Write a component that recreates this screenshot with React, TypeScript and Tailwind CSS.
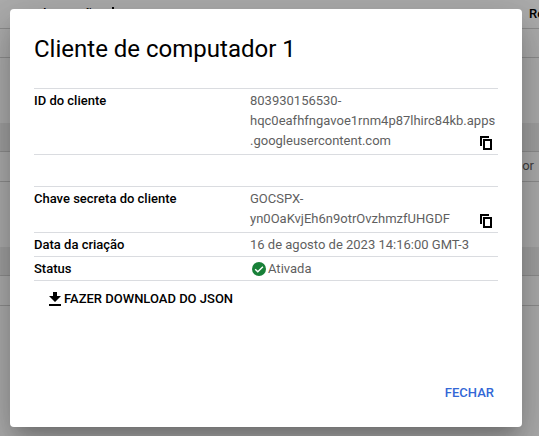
import type { ReactNode } from "react";

function CopyIcon() {
  return (
    <svg viewBox="0 0 12 14" className="block h-[14px] w-[12px]" fill="none" stroke="#000" strokeWidth="2">
      <path d="M1 10V1H9" />
      <path d="M4 4H11V13H4Z" />
    </svg>
  );
}

function DownloadIcon() {
  return (
    <svg viewBox="0 0 12 14" className="block h-[14px] w-[12px]" fill="#000">
      <path d="M4 0H8V4H12L6 10L0 4H4ZM0 12H12V14H0Z" />
    </svg>
  );
}

function SortIcon() {
  return (
    <svg viewBox="0 0 12 12" className="block size-3" fill="none" stroke="#000" strokeWidth="2">
      <path d="M6 0V10M1 5.5L6 10.5L11 5.5" />
    </svg>
  );
}

function CheckIcon() {
  return (
    <svg viewBox="0 0 14 14" className="mr-[2px] ml-[2px] block size-[14px]">
      <circle cx="7" cy="7" r="7" fill="#188038" />
      <path d="M3.2 7.2L5.8 9.8L10.9 4.7" fill="none" stroke="#fff" strokeWidth="1.4" />
    </svg>
  );
}

function Row({ label, children, copy, className }: { label: string; children: ReactNode; copy?: boolean; className: string }) {
  return (
    <div className={`flex border-[#dadce0] pt-[2px] leading-5 ${className}`}>
      <div className="w-[216px] shrink-0 font-medium text-black">{label}</div>
      <div className="flex w-0 grow whitespace-nowrap text-[#5f5f5f]">{children}</div>
      {copy && (
        <button className="mr-[6px] mb-[4px] self-end" aria-label="Copiar">
          <CopyIcon />
        </button>
      )}
    </div>
  );
}

function Backdrop() {
  return (
    <div className="h-full bg-white text-[13px] leading-5 text-black">
      <div className="flex h-[29px] justify-between border-b border-[#d2d2d2] pt-[4px] pl-[39px] font-medium">
        <span className="flex gap-[8px]">
          da criação
          <span className="pt-[3px]">
            <SortIcon />
          </span>
        </span>
        <span className="w-[10px] whitespace-nowrap">Re</span>
      </div>
      <div className="h-[29px] border-b border-[#d2d2d2]" />
      <div className="mt-[65px] h-[29px] border-b border-[#d2d2d2] bg-[#ededed]" />
      <div className="flex h-[30px] justify-end border-b border-[#d2d2d2] pt-[4px] pr-[5px] text-[#5f5f5f]">or</div>
      <div className="mt-[65px] h-[29px] border-b border-[#d2d2d2] bg-[#ededed]" />
      <div className="h-[30px] border-b border-[#d2d2d2]" />
    </div>
  );
}

export default function App() {
  return (
    <div className="relative h-[436px] w-[539px] overflow-hidden font-['Roboto',sans-serif]">
      <Backdrop />
      <div className="absolute inset-0 bg-black/32 pt-[9px] pl-[10px]">
        <div
          role="dialog"
          className="flex h-[418px] w-[512px] flex-col rounded-[4px] bg-white px-6 text-[13px] shadow-[0_11px_15px_-7px_rgba(0,0,0,0.2),0_24px_38px_3px_rgba(0,0,0,0.14),0_9px_46px_8px_rgba(0,0,0,0.12)]"
        >
          <h1 className="mt-6 text-2xl leading-8 text-black">Cliente de computador 1</h1>
          <div className="mt-[23px]">
            <Row label="ID do cliente" copy className="h-[67px] border-y">
              <span>
                803930156530-
                <br />
                hqc0eafhfngavoe1rnm4p87lhirc84kb.apps
                <br />
                .googleusercontent.com
              </span>
            </Row>
            <Row label="Chave secreta do cliente" copy className="mt-[31px] h-[47px] border-y">
              <span>
                GOCSPX-
                <br />
                yn0OaKvjEh6n9otrOvzhmzfUHGDF
              </span>
            </Row>
            <Row label="Data da criação" className="h-[24px] border-b">16 de agosto de 2023 14:16:00 GMT-3</Row>
            <Row label="Status" className="h-[24px] border-b">
              <span className="flex h-5 items-center">
                <CheckIcon />
                Ativada
              </span>
            </Row>
          </div>
          <button className="mt-[8px] ml-[15px] flex h-5 items-center gap-[3px] self-start font-medium text-black">
            <DownloadIcon />
            FAZER DOWNLOAD DO JSON
          </button>
          <button className="mt-auto mr-1 mb-[24px] self-end leading-5 font-medium text-[#3367d6]">FECHAR</button>
        </div>
      </div>
    </div>
  );
}
